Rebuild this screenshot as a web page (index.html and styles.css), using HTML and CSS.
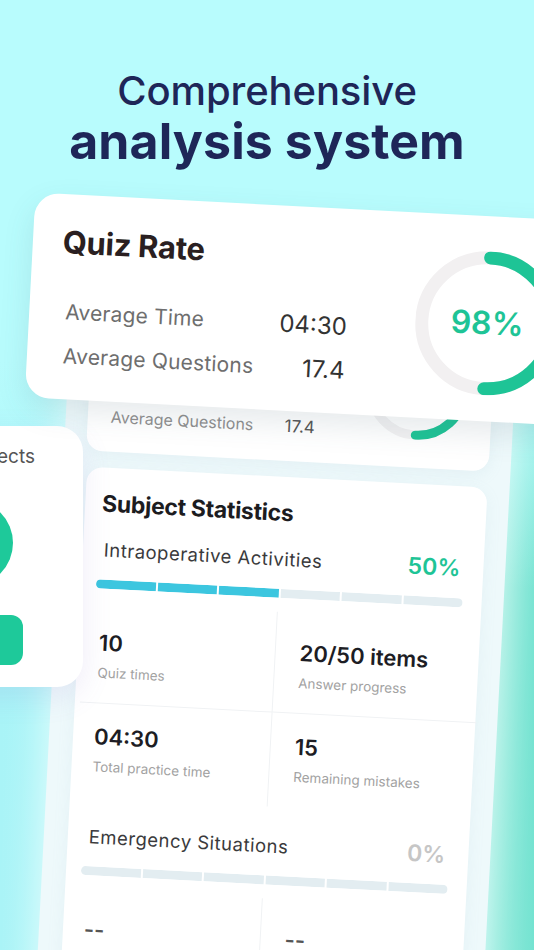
FILE: index.html
```html
<!DOCTYPE html>
<html lang="en">
<head>
<meta charset="utf-8">
<title>Comprehensive analysis system</title>
<link rel="stylesheet" href="styles.css">
</head>
<body>
<div class="stage">
  <header class="headline">
    <div class="headline-light">Comprehensive</div>
    <div class="headline-bold">analysis system</div>
  </header>

  <div class="phone">
    <section class="card mini-rate">
      <div class="mini-left">
        <div class="mini-title">Quiz Rate</div>
        <div class="mini-rows">
          <span class="mini-label">Average Time</span><span class="mini-value">04:30</span>
          <span class="mini-label">Average Questions</span><span class="mini-value">17.4</span>
        </div>
      </div>
      <div class="mini-ring">
        <svg width="104" height="104" viewBox="0 0 104 104">
          <circle cx="52" cy="52" r="47.5" fill="none" stroke="#f3f2f3" stroke-width="9"/>
          <circle cx="52" cy="52" r="47.5" fill="none" stroke="#1ec496" stroke-width="9" stroke-linecap="round" pathLength="100" stroke-dasharray="50 100" transform="rotate(-90 52 52)"/>
        </svg>
      </div>
    </section>

    <section class="card subject">
      <h2 class="subject-title">Subject Statistics</h2>

      <div class="topic-row">
        <span class="topic-name">Intraoperative Activities</span>
        <span class="topic-pct">50%</span>
      </div>
      <div class="seg-bar">
        <span class="seg on"></span><span class="seg on"></span><span class="seg on"></span><span class="seg"></span><span class="seg"></span><span class="seg"></span>
      </div>
      <div class="stat-grid">
        <div class="cell cell-l row-1"><div class="num">10</div><div class="lbl">Quiz times</div></div>
        <div class="cell cell-r row-1"><div class="num">20/50 items</div><div class="lbl">Answer progress</div></div>
        <div class="cell cell-l row-2"><div class="num">04:30</div><div class="lbl">Total practice time</div></div>
        <div class="cell cell-r row-2"><div class="num">15</div><div class="lbl">Remaining mistakes</div></div>
      </div>

      <div class="topic-row topic-next">
        <span class="topic-name">Emergency Situations</span>
        <span class="topic-pct topic-pct-zero">0%</span>
      </div>
      <div class="seg-bar">
        <span class="seg"></span><span class="seg"></span><span class="seg"></span><span class="seg"></span><span class="seg"></span><span class="seg"></span>
      </div>
      <div class="stat-grid">
        <div class="cell cell-l row-1"><div class="num num-empty">--</div><div class="lbl">Quiz times</div></div>
        <div class="cell cell-r row-1"><div class="num num-empty">--</div><div class="lbl">Answer progress</div></div>
      </div>
    </section>
  </div>

  <aside class="side-card">
    <div class="side-title">Subjects</div>
    <div class="side-disc"></div>
    <div class="side-btn"></div>
  </aside>

  <section class="rate-card">
    <div class="rate-left">
      <div class="rate-title">Quiz Rate</div>
      <div class="rate-rows">
        <span class="rate-label">Average Time</span><span class="rate-value">04:30</span>
        <span class="rate-label">Average Questions</span><span class="rate-value">17.4</span>
      </div>
    </div>
    <div class="rate-ring">
      <svg width="144" height="144" viewBox="0 0 144 144">
        <circle cx="72" cy="72" r="65.5" fill="none" stroke="#f2f0f1" stroke-width="13"/>
        <circle cx="72" cy="72" r="65.5" fill="none" stroke="#1ec496" stroke-width="13" stroke-linecap="round" pathLength="100" stroke-dasharray="50 100" transform="rotate(-90 72 72)"/>
      </svg>
      <span class="rate-pct">98%</span>
    </div>
  </section>
</div>
</body>
</html>
```

FILE: styles.css
```css
* {
  box-sizing: border-box;
  margin: 0;
  padding: 0;
}

body {
  margin: 0;
  font-family: Inter, "Noto Sans", "Liberation Sans", sans-serif;
  background: #b8fcfd;
}

.stage {
  position: relative;
  width: 534px;
  height: 950px;
  overflow: hidden;
  display: flex;
  flex-direction: column;
  background:
    linear-gradient(180deg, #b8fcfd 0%, #b8fcfd 38%, rgba(184, 252, 253, 0) 62%),
    linear-gradient(90deg, #a9f4f7 0%, #b5fafb 40%, #b2f7f5 85%, #8eeadb 93%, #74e3d1 100%);
}

/* ---------- headline ---------- */
.headline {
  flex: none;
  padding-top: 67px;
  text-align: center;
  color: #1e2658;
}

.headline-light {
  font-size: 40px;
  font-weight: 500;
  line-height: 48px;
  letter-spacing: -0.1px;
}

.headline-bold {
  font-size: 50px;
  font-weight: 700;
  line-height: 52px;
  letter-spacing: 0.1px;
}

/* ---------- phone panel ---------- */
.phone {
  flex: none;
  width: 447px;
  margin: 113px 0 0 63px;
  padding: 20px 0 80px;
  background: #eef9fb;
  border-radius: 40px;
  box-shadow: 0 0 40px rgba(255, 255, 255, 0.75);
  transform: rotate(3deg);
  transform-origin: 204px 195px;
}

.card {
  background: #ffffff;
  border-radius: 16px;
}

/* mini quiz rate card (behind the large one) */
.mini-rate {
  margin: 0 22px;
  height: 160px;
  display: flex;
  align-items: flex-start;
  box-shadow: 0 4px 16px rgba(150, 180, 200, 0.12);
}

.mini-left {
  flex: 0 0 253px;
  padding: 17px 0 0 23px;
}

.mini-title {
  font-size: 22px;
  font-weight: 700;
  line-height: 26px;
  color: #2a1f21;
}

.mini-rows {
  margin-top: 23px;
  display: grid;
  grid-template-columns: 174px auto;
  row-gap: 26px;
}

.mini-label {
  font-size: 16px;
  line-height: 22px;
  color: #8f8f8f;
}

.mini-value {
  font-size: 17px;
  line-height: 22px;
  color: #555555;
}

.mini-ring {
  flex: none;
  width: 104px;
  height: 104px;
  margin: 28px 0 0 23px;
}

.mini-ring svg {
  display: block;
}

/* subject statistics card */
.subject {
  margin: 16px 22px 0 24px;
  padding: 23px 19px 40px 15px;
  box-shadow: 0 4px 16px rgba(150, 180, 200, 0.1);
}

.subject-title {
  padding-left: 2px;
  font-size: 23px;
  font-weight: 700;
  line-height: 26px;
  letter-spacing: -0.3px;
  color: #1c1c1f;
}

.topic-row {
  margin-top: 19px;
  height: 28px;
  padding: 0 4px 0 6px;
  display: flex;
  align-items: center;
  justify-content: space-between;
}

.topic-next {
  margin-top: 25px;
}

.topic-name {
  font-size: 18.5px;
  line-height: 28px;
  letter-spacing: 0.5px;
  color: #3a3a3c;
}

.topic-pct {
  font-size: 23px;
  font-weight: 600;
  line-height: 28px;
  color: #1ec496;
}

.topic-pct-zero {
  color: #c6c6c6;
}

.seg-bar {
  margin-top: 16px;
  height: 9px;
  display: flex;
  gap: 2px;
  border-radius: 5px;
  overflow: hidden;
}

.seg {
  flex: 1;
  background: #e3edf1;
}

.seg.on {
  background: #3cc6df;
}

.stat-grid {
  margin: 14px -20px 0 -10px;
  display: grid;
  grid-template-columns: 193px 1fr;
}

.cell-l {
  padding-left: 16px;
  border-right: 1px solid #f0f2f4;
}

.cell-r {
  padding-left: 24px;
}

.row-1 {
  padding-top: 27px;
  padding-bottom: 21px;
  border-bottom: 1px solid #f0f2f4;
}

.row-2 {
  padding-top: 20px;
  padding-bottom: 22px;
}

.num {
  font-size: 22px;
  font-weight: 600;
  line-height: 26px;
  color: #1d1d24;
}

.num-empty {
  color: #555555;
}

.lbl {
  margin-top: 8px;
  font-size: 13.5px;
  line-height: 18px;
  color: #a2a2a2;
}

/* ---------- left floating card ---------- */
.side-card {
  position: absolute;
  left: -160px;
  top: 426px;
  width: 243px;
  height: 261px;
  padding-top: 19px;
  display: flex;
  flex-direction: column;
  align-items: flex-end;
  background: #ffffff;
  border-radius: 26px;
  box-shadow: 0 10px 30px rgba(120, 100, 200, 0.12);
}

.side-title {
  margin-right: 48px;
  font-size: 19px;
  line-height: 24px;
  color: #555555;
}

.side-disc {
  margin: 31px 70px 0 0;
  width: 86px;
  height: 86px;
  border-radius: 50%;
  background: #1ec99a;
}

.side-btn {
  margin: 29px 60px 0 0;
  width: 120px;
  height: 50px;
  border-radius: 12px;
  background: #1ec99a;
}

/* ---------- large quiz rate card ---------- */
.rate-card {
  position: absolute;
  left: 21px;
  top: 205px;
  width: 560px;
  height: 205px;
  display: flex;
  align-items: flex-start;
  background: #ffffff;
  border-radius: 24px;
  box-shadow: 0 12px 30px rgba(60, 90, 110, 0.13);
  transform: rotate(3deg);
  transform-origin: 246px 270px;
}

.rate-left {
  flex: 0 0 318px;
  padding: 30px 0 0 30px;
}

.rate-title {
  font-size: 31px;
  font-weight: 700;
  line-height: 36px;
  letter-spacing: -0.3px;
  color: #2a1f21;
}

.rate-rows {
  margin-top: 38px;
  display: grid;
  grid-template-columns: 1fr auto;
  row-gap: 16px;
}

.rate-label {
  padding-left: 6px;
  font-size: 21px;
  line-height: 28px;
  letter-spacing: 0.2px;
  color: #6e6e6e;
}

.rate-value {
  font-size: 24px;
  line-height: 28px;
  text-align: right;
  color: #333333;
}

.rate-ring {
  flex: none;
  width: 144px;
  height: 144px;
  margin: 35px 0 0 68px;
  display: grid;
  place-items: center;
}

.rate-ring svg,
.rate-pct {
  grid-area: 1 / 1;
}

.rate-ring svg {
  display: block;
}

.rate-pct {
  font-size: 32px;
  font-weight: 600;
  line-height: 36px;
  color: #1ec496;
}
```
